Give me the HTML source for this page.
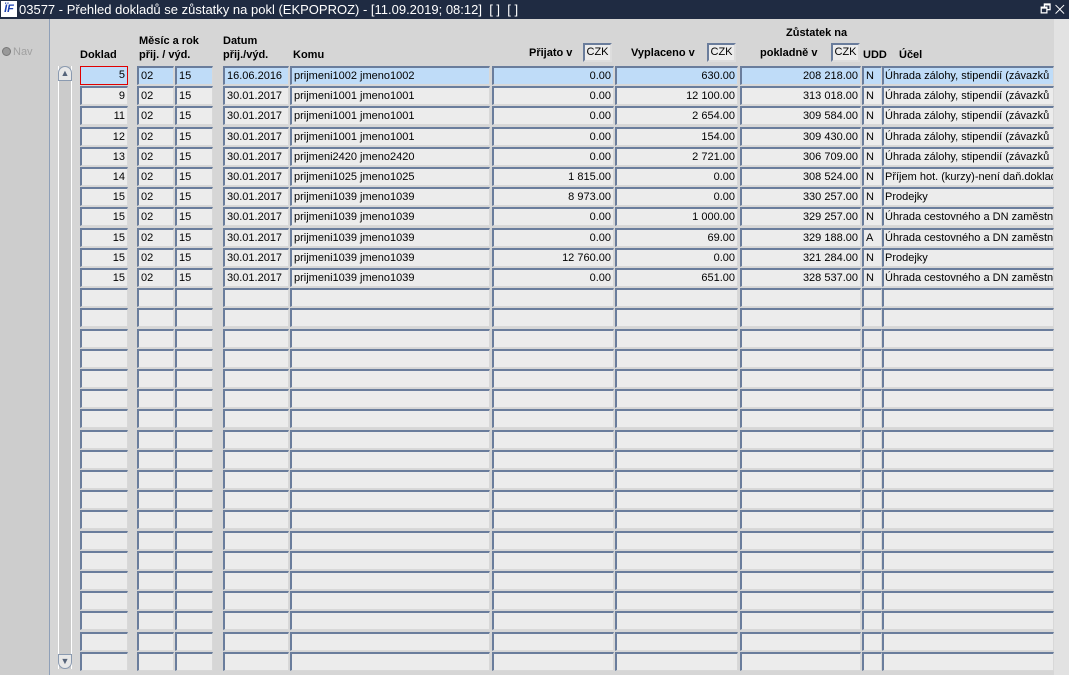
<!DOCTYPE html>
<html><head><meta charset="utf-8"><style>
*{margin:0;padding:0;box-sizing:border-box}
body{width:1069px;height:675px;overflow:hidden;background:#d6d6d6;font-family:"Liberation Sans",Arial,sans-serif;font-size:11px;color:#000;position:relative}
#tb{position:absolute;left:0;top:0;width:1069px;height:19px;background:#1f2b42;color:#fff;font-size:13px;line-height:19px;padding-left:19px;white-space:pre}
#logo{position:absolute;left:1px;top:1px;width:16px;height:16px;background:#fff;color:#1a3fb0;font-weight:bold;font-style:italic;font-size:11px;line-height:16px;text-align:center}
#wc{position:absolute;right:4px;top:0;color:#fff;font-size:12px}
#left{position:absolute;left:0;top:19px;width:50px;height:656px;background:#cdcdcd;border-right:1px solid #8fa0b8}
#nav{position:absolute;left:2px;top:27px;color:#a0a0a0;font-size:11px}
#nav i{display:inline-block;width:9px;height:9px;border-radius:50%;background:#999;border:1px solid #777;vertical-align:-1px;margin-right:2px}
#right{position:absolute;left:1054px;top:19px;width:15px;height:656px;background:#e2e2e2}
.h{position:absolute;font-weight:bold;font-size:11px;line-height:14px}
.cz{position:absolute;width:29px;height:19px;background:#ececec;border:2px solid #6a7d9c;border-right-color:#ddd;border-bottom-color:#ddd;font-size:11px;line-height:15px;text-align:center}
#sb{position:absolute;left:58px;top:66px;width:14px;height:603px;background:#cbcbcb;border-left:1px solid #fff;border-right:1px solid #fff}
.sbb{position:absolute;left:-1px;width:14px;height:15px;background:#e8e8e8;border:1px solid #8a9ab0;font-size:9px;line-height:13px;text-align:center;color:#56647a}
.r{position:absolute;left:0;width:1069px;height:20px}
.r div{position:absolute;top:0;height:19px;background:#ececec;border:2px solid #6a7d9c;border-right-color:#d8d8d8;border-bottom-color:#d8d8d8;border-right-width:1px;border-bottom-width:1px;line-height:16px;padding:0 2px;white-space:nowrap;overflow:hidden}
.r .a{left:80px;width:48px;text-align:right}
.r .b{left:137px;width:37px}
.r .c{left:175px;width:38px}
.r .d{left:223px;width:66px}
.r .e{left:290px;width:200px}
.r .f{left:492px;width:122px;text-align:right}
.r .g{left:615px;width:123px;text-align:right}
.r .hh{left:740px;width:121px;text-align:right}
.r .i{left:862px;width:20px}
.r .j{left:882px;width:172px;padding-left:1px}
.sel div{background:#bfdcf8}
.sel .a{border:1px solid #e00000;background:#bfdcf8}
</style></head><body>
<div id="tb"><span id="logo">ÏF</span>03577 - Přehled dokladů se zůstatky na pokl (EKPOPROZ) - [11.09.2019; 08:12]  [ ]  [ ]</div>
<div id="wc">🗗 ✕</div>
<div id="left"><div id="nav"><i></i>Nav</div></div>
<div id="right"></div>
<div class="h" style="left:80px;top:48px">Doklad</div>
<div class="h" style="left:139px;top:34px">Měsíc a rok<br>přij. / výd.</div>
<div class="h" style="left:223px;top:34px">Datum<br>přij./výd.</div>
<div class="h" style="left:293px;top:48px">Komu</div>
<div class="h" style="left:529px;top:46px">Přijato v</div>
<div class="cz" style="left:583px;top:43px">CZK</div>
<div class="h" style="left:631px;top:46px">Vyplaceno v</div>
<div class="cz" style="left:707px;top:43px">CZK</div>
<div class="h" style="left:786px;top:26px">Zůstatek na</div>
<div class="h" style="left:760px;top:46px">pokladně v</div>
<div class="cz" style="left:831px;top:43px">CZK</div>
<div class="h" style="left:863px;top:48px">UDD</div>
<div class="h" style="left:899px;top:48px">Účel</div>
<div id="sb"><div class="sbb" style="top:0;border-radius:7px 7px 0 0">▲</div><div class="sbb" style="bottom:0;border-radius:0 0 7px 7px">▼</div></div>
<div class="r sel" style="top:66px"><div class="a">5</div><div class="b">02</div><div class="c">15</div><div class="d">16.06.2016</div><div class="e">prijmeni1002 jmeno1002</div><div class="f">0.00</div><div class="g">630.00</div><div class="hh">208 218.00</div><div class="i">N</div><div class="j">Úhrada zálohy, stipendií  (závazků</div></div>
<div class="r" style="top:86px"><div class="a">9</div><div class="b">02</div><div class="c">15</div><div class="d">30.01.2017</div><div class="e">prijmeni1001 jmeno1001</div><div class="f">0.00</div><div class="g">12 100.00</div><div class="hh">313 018.00</div><div class="i">N</div><div class="j">Úhrada zálohy, stipendií  (závazků</div></div>
<div class="r" style="top:106px"><div class="a">11</div><div class="b">02</div><div class="c">15</div><div class="d">30.01.2017</div><div class="e">prijmeni1001 jmeno1001</div><div class="f">0.00</div><div class="g">2 654.00</div><div class="hh">309 584.00</div><div class="i">N</div><div class="j">Úhrada zálohy, stipendií  (závazků</div></div>
<div class="r" style="top:127px"><div class="a">12</div><div class="b">02</div><div class="c">15</div><div class="d">30.01.2017</div><div class="e">prijmeni1001 jmeno1001</div><div class="f">0.00</div><div class="g">154.00</div><div class="hh">309 430.00</div><div class="i">N</div><div class="j">Úhrada zálohy, stipendií  (závazků</div></div>
<div class="r" style="top:147px"><div class="a">13</div><div class="b">02</div><div class="c">15</div><div class="d">30.01.2017</div><div class="e">prijmeni2420 jmeno2420</div><div class="f">0.00</div><div class="g">2 721.00</div><div class="hh">306 709.00</div><div class="i">N</div><div class="j">Úhrada zálohy, stipendií  (závazků</div></div>
<div class="r" style="top:167px"><div class="a">14</div><div class="b">02</div><div class="c">15</div><div class="d">30.01.2017</div><div class="e">prijmeni1025 jmeno1025</div><div class="f">1 815.00</div><div class="g">0.00</div><div class="hh">308 524.00</div><div class="i">N</div><div class="j">Příjem hot. (kurzy)-není daň.doklad</div></div>
<div class="r" style="top:187px"><div class="a">15</div><div class="b">02</div><div class="c">15</div><div class="d">30.01.2017</div><div class="e">prijmeni1039 jmeno1039</div><div class="f">8 973.00</div><div class="g">0.00</div><div class="hh">330 257.00</div><div class="i">N</div><div class="j">Prodejky</div></div>
<div class="r" style="top:207px"><div class="a">15</div><div class="b">02</div><div class="c">15</div><div class="d">30.01.2017</div><div class="e">prijmeni1039 jmeno1039</div><div class="f">0.00</div><div class="g">1 000.00</div><div class="hh">329 257.00</div><div class="i">N</div><div class="j">Úhrada cestovného a DN zaměstnanců</div></div>
<div class="r" style="top:228px"><div class="a">15</div><div class="b">02</div><div class="c">15</div><div class="d">30.01.2017</div><div class="e">prijmeni1039 jmeno1039</div><div class="f">0.00</div><div class="g">69.00</div><div class="hh">329 188.00</div><div class="i">A</div><div class="j">Úhrada cestovného a DN zaměstnanců</div></div>
<div class="r" style="top:248px"><div class="a">15</div><div class="b">02</div><div class="c">15</div><div class="d">30.01.2017</div><div class="e">prijmeni1039 jmeno1039</div><div class="f">12 760.00</div><div class="g">0.00</div><div class="hh">321 284.00</div><div class="i">N</div><div class="j">Prodejky</div></div>
<div class="r" style="top:268px"><div class="a">15</div><div class="b">02</div><div class="c">15</div><div class="d">30.01.2017</div><div class="e">prijmeni1039 jmeno1039</div><div class="f">0.00</div><div class="g">651.00</div><div class="hh">328 537.00</div><div class="i">N</div><div class="j">Úhrada cestovného a DN zaměstnanců</div></div>
<div class="r" style="top:288px"><div class="a"></div><div class="b"></div><div class="c"></div><div class="d"></div><div class="e"></div><div class="f"></div><div class="g"></div><div class="hh"></div><div class="i"></div><div class="j"></div></div>
<div class="r" style="top:308px"><div class="a"></div><div class="b"></div><div class="c"></div><div class="d"></div><div class="e"></div><div class="f"></div><div class="g"></div><div class="hh"></div><div class="i"></div><div class="j"></div></div>
<div class="r" style="top:329px"><div class="a"></div><div class="b"></div><div class="c"></div><div class="d"></div><div class="e"></div><div class="f"></div><div class="g"></div><div class="hh"></div><div class="i"></div><div class="j"></div></div>
<div class="r" style="top:349px"><div class="a"></div><div class="b"></div><div class="c"></div><div class="d"></div><div class="e"></div><div class="f"></div><div class="g"></div><div class="hh"></div><div class="i"></div><div class="j"></div></div>
<div class="r" style="top:369px"><div class="a"></div><div class="b"></div><div class="c"></div><div class="d"></div><div class="e"></div><div class="f"></div><div class="g"></div><div class="hh"></div><div class="i"></div><div class="j"></div></div>
<div class="r" style="top:389px"><div class="a"></div><div class="b"></div><div class="c"></div><div class="d"></div><div class="e"></div><div class="f"></div><div class="g"></div><div class="hh"></div><div class="i"></div><div class="j"></div></div>
<div class="r" style="top:409px"><div class="a"></div><div class="b"></div><div class="c"></div><div class="d"></div><div class="e"></div><div class="f"></div><div class="g"></div><div class="hh"></div><div class="i"></div><div class="j"></div></div>
<div class="r" style="top:430px"><div class="a"></div><div class="b"></div><div class="c"></div><div class="d"></div><div class="e"></div><div class="f"></div><div class="g"></div><div class="hh"></div><div class="i"></div><div class="j"></div></div>
<div class="r" style="top:450px"><div class="a"></div><div class="b"></div><div class="c"></div><div class="d"></div><div class="e"></div><div class="f"></div><div class="g"></div><div class="hh"></div><div class="i"></div><div class="j"></div></div>
<div class="r" style="top:470px"><div class="a"></div><div class="b"></div><div class="c"></div><div class="d"></div><div class="e"></div><div class="f"></div><div class="g"></div><div class="hh"></div><div class="i"></div><div class="j"></div></div>
<div class="r" style="top:490px"><div class="a"></div><div class="b"></div><div class="c"></div><div class="d"></div><div class="e"></div><div class="f"></div><div class="g"></div><div class="hh"></div><div class="i"></div><div class="j"></div></div>
<div class="r" style="top:510px"><div class="a"></div><div class="b"></div><div class="c"></div><div class="d"></div><div class="e"></div><div class="f"></div><div class="g"></div><div class="hh"></div><div class="i"></div><div class="j"></div></div>
<div class="r" style="top:531px"><div class="a"></div><div class="b"></div><div class="c"></div><div class="d"></div><div class="e"></div><div class="f"></div><div class="g"></div><div class="hh"></div><div class="i"></div><div class="j"></div></div>
<div class="r" style="top:551px"><div class="a"></div><div class="b"></div><div class="c"></div><div class="d"></div><div class="e"></div><div class="f"></div><div class="g"></div><div class="hh"></div><div class="i"></div><div class="j"></div></div>
<div class="r" style="top:571px"><div class="a"></div><div class="b"></div><div class="c"></div><div class="d"></div><div class="e"></div><div class="f"></div><div class="g"></div><div class="hh"></div><div class="i"></div><div class="j"></div></div>
<div class="r" style="top:591px"><div class="a"></div><div class="b"></div><div class="c"></div><div class="d"></div><div class="e"></div><div class="f"></div><div class="g"></div><div class="hh"></div><div class="i"></div><div class="j"></div></div>
<div class="r" style="top:611px"><div class="a"></div><div class="b"></div><div class="c"></div><div class="d"></div><div class="e"></div><div class="f"></div><div class="g"></div><div class="hh"></div><div class="i"></div><div class="j"></div></div>
<div class="r" style="top:632px"><div class="a"></div><div class="b"></div><div class="c"></div><div class="d"></div><div class="e"></div><div class="f"></div><div class="g"></div><div class="hh"></div><div class="i"></div><div class="j"></div></div>
<div class="r" style="top:652px"><div class="a"></div><div class="b"></div><div class="c"></div><div class="d"></div><div class="e"></div><div class="f"></div><div class="g"></div><div class="hh"></div><div class="i"></div><div class="j"></div></div>
</body></html>
